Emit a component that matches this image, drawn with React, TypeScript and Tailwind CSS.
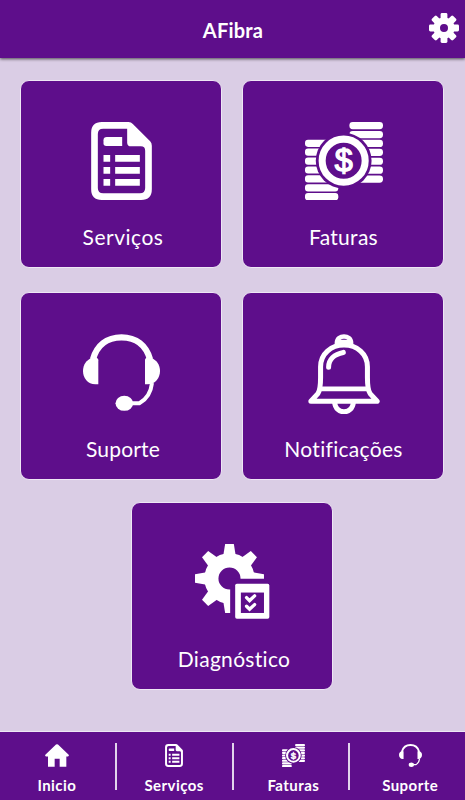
import { memo } from 'react'
import type { ReactNode } from 'react'

interface IconProps {
  className?: string
}

const TEETH = [0, 45, 90, 135, 180, 225, 270, 315]

function GearIcon({ className }: IconProps) {
  return (
    <svg viewBox="-15 -15 30 30" className={className} aria-hidden="true">
      {TEETH.map((angle) => (
        <rect key={angle} x="-3.4" y="-15" width="6.8" height="10" rx="1.4" fill="currentColor" transform={`rotate(${angle})`} />
      ))}
      <circle r="7.3" fill="none" stroke="currentColor" strokeWidth="6.6" />
    </svg>
  )
}

function DocumentIcon({ className }: IconProps) {
  return (
    <svg viewBox="0 0 182 234" className={className} fill="currentColor" aria-hidden="true">
      <path
        fillRule="evenodd"
        d="M32 0H112Q120 0 125 6L177 58Q182 63 182 71V202Q182 234 150 234H32Q0 234 0 202V32Q0 0 32 0ZM36 20Q20 20 20 36V198Q20 214 36 214H146Q162 214 162 198V86Q162 73 149 73H120Q108 73 108 62V20Z"
      />
      <path d="M47 45H93V72H45Q37 72 37 64V55Q37 45 47 45Z" />
      <path d="M37 99h20v20h-20zM37 135h20v20h-20zM37 171h20v20h-20zM72 99h74v20h-74zM72 135h74v20h-74zM72 171h74v20h-74z" />
    </svg>
  )
}

const COINS = [0, 26.5, 53, 79.5, 106, 132.5, 159]

function CoinsIcon({ className }: IconProps) {
  return (
    <svg viewBox="0 0 232 232" className={className} fill="currentColor" aria-hidden="true">
      {COINS.map((y) => (
        <rect key={`right-${y}`} x="132" y={y} width="100" height="21.5" rx="10" />
      ))}
      {COINS.map((y) => (
        <rect key={`left-${y}`} x="0" y={y + 52.5} width="99" height="21.5" rx="9" />
      ))}
      <circle cx="115" cy="115" r="83" className="fill-[#5e0e8b]" />
      <circle cx="115" cy="115" r="64" fill="none" stroke="currentColor" strokeWidth="21" />
      <text
        x="115"
        y="147"
        textAnchor="middle"
        stroke="currentColor"
        strokeWidth="4"
        className="font-['Liberation_Sans',sans-serif] text-[96px]"
      >
        $
      </text>
    </svg>
  )
}

function HeadsetIcon({ className }: IconProps) {
  return (
    <svg viewBox="0 0 231 231" className={className} fill="currentColor" aria-hidden="true">
      <path d="M30 76C41 35 71 10 115.500 10S190 35 201 76" fill="none" stroke="currentColor" strokeWidth="19" />
      <path d="M26 71H38Q46 71 46 79V151H37C14 151 0 132 0 111C0 91 11 78 26 71Z" />
      <path d="M205 71H193Q186 71 186 79V151H194C217 151 231 132 231 111C231 91 220 78 205 71Z" />
      <path d="M207 147C204 174 194 194 169 208H145" fill="none" stroke="currentColor" strokeWidth="12" />
      <ellipse cx="124" cy="208" rx="26.500" ry="22.500" />
    </svg>
  )
}

function BellIcon({ className }: IconProps) {
  return (
    <svg
      viewBox="0 0 214 239"
      className={className}
      fill="none"
      stroke="currentColor"
      strokeWidth="15"
      strokeLinecap="round"
      strokeLinejoin="round"
      aria-hidden="true"
    >
      <path d="M86 34V27C86 1 128 1 128 27V34M94 24H120" strokeWidth="14" />
      <path d="M8 201L29 178C36 168 37 151 37 130V98C37 59 68 33 107 33S177 59 177 98V130C177 151 178 168 185 178L206 201Z" />
      <path d="M37 164H177" strokeWidth="14" />
      <path d="M61 99C61 76 78 60 105 55" strokeWidth="15" />
      <path d="M79 204C82 242 132 242 135 204" />
    </svg>
  )
}

function DiagnosticIcon({ className }: IconProps) {
  return (
    <svg viewBox="0 0 224 224" className={className} aria-hidden="true">
      <g transform="translate(103 103)">
        {TEETH.map((angle) => (
          <path key={angle} d="M-20 -60L-13 -103H13L20 -60Z" fill="currentColor" transform={`rotate(${angle})`} />
        ))}
        <circle r="54" fill="none" stroke="currentColor" strokeWidth="42" />
      </g>
      <path d="M105 104H224V224H105Z" className="fill-[#5e0e8b]" />
      <rect x="120" y="119" width="102" height="104" rx="5" fill="currentColor" />
      <rect x="137" y="145" width="69" height="61" className="fill-[#5e0e8b]" />
      <path d="M154 160L163 169L178 155M154 186L163 195L178 181" fill="none" stroke="currentColor" strokeWidth="10" strokeLinecap="round" />
    </svg>
  )
}

function HomeIcon({ className }: IconProps) {
  return (
    <svg viewBox="0 0 72 68" className={className} fill="currentColor" aria-hidden="true">
      <path d="M33 1Q36 -1 39 1L71 32Q73 36 69 37H64V68H44V44H29V68H9V37H3Q-1 36 1 32Z" />
    </svg>
  )
}

interface CardProps {
  label: string
  labelClass: string
  children: ReactNode
}

const MenuCard = memo(function MenuCard({ label, labelClass, children }: CardProps) {
  return (
    <button className="flex h-[188px] w-[202px] flex-col items-center rounded-[9px] border border-[#eee6f5] bg-[#5e0e8b] text-white">
      <span className="flex h-[142px] items-start pt-[41px] pl-px">{children}</span>
      <span className={`text-[21px] leading-7 ${labelClass}`}>{label}</span>
    </button>
  )
})

interface NavItemProps {
  label: string
  className?: string
  children: ReactNode
}

function NavItem({ label, className = 'pt-3', children }: NavItemProps) {
  return (
    <a href="#" className={`flex w-[115px] flex-col items-center text-[15px] leading-5 font-bold ${className}`}>
      <span className="flex h-[31px] items-start">{children}</span>
      <span className="tracking-[0.45px]">{label}</span>
    </a>
  )
}

function NavDivider() {
  return <span className="mt-[11px] h-[47px] w-[2px] bg-[#e2d4ec]" />
}

export default function App() {
  return (
    <div className="flex h-[800px] w-[465px] flex-col overflow-hidden bg-[#dacde5] font-['Lato','Open_Sans',sans-serif] text-white">
      {/* Header */}
      <header className="grid h-[58px] shrink-0 grid-cols-[1fr_auto_1fr] items-center bg-[#5e0e8b] shadow-[0_1px_3px_rgba(0,0,0,0.65)]">
        <span />
        <h1 className="mt-px pl-px text-[20px] leading-6 font-bold tracking-[0.2px]">AFibra</h1>
        <button className="mr-[6px] -mt-[2px] justify-self-end" aria-label="Configurações">
          <GearIcon className="h-[30px] w-[30px]" />
        </button>
      </header>

      {/* Main menu */}
      <main className="flex flex-1 flex-col items-center pt-[22px] pr-px">
        <div className="grid grid-cols-2 gap-x-5 gap-y-6">
          <MenuCard label="Serviços" labelClass="pl-[4px] tracking-[0.5px]">
            <DocumentIcon className="h-[78px] w-[61px]" />
          </MenuCard>
          <MenuCard label="Faturas" labelClass="pl-px tracking-[0.3px]">
            <CoinsIcon className="h-[78px] w-[78px]" />
          </MenuCard>
          <MenuCard label="Suporte" labelClass="pl-[4px] tracking-[0.2px]">
            <HeadsetIcon className="h-[77px] w-[77px]" />
          </MenuCard>
          <MenuCard label="Notificações" labelClass="pl-px tracking-[0.3px]">
            <BellIcon className="h-[80px] w-[72px]" />
          </MenuCard>
        </div>
        <div className="mt-[22px]">
          <MenuCard label="Diagnóstico" labelClass="pl-[4px] tracking-[0.3px]">
            <DiagnosticIcon className="h-[75px] w-[75px]" />
          </MenuCard>
        </div>
      </main>

      {/* Bottom navigation */}
      <nav className="flex h-[69px] shrink-0 border-t border-[#eee6f5] bg-[#5e0e8b]">
        <NavItem label="Inicio" className="pt-3 pr-px">
          <HomeIcon className="h-[23px] w-6" />
        </NavItem>
        <NavDivider />
        <NavItem label="Serviços">
          <DocumentIcon className="h-[23px] w-[18px]" />
        </NavItem>
        <NavDivider />
        <NavItem label="Faturas" className="pt-3 pl-[5px]">
          <CoinsIcon className="h-[23px] w-[23px]" />
        </NavItem>
        <NavDivider />
        <NavItem label="Suporte" className="pt-3 pl-[5px]">
          <HeadsetIcon className="h-[23px] w-[23px]" />
        </NavItem>
      </nav>
    </div>
  )
}
